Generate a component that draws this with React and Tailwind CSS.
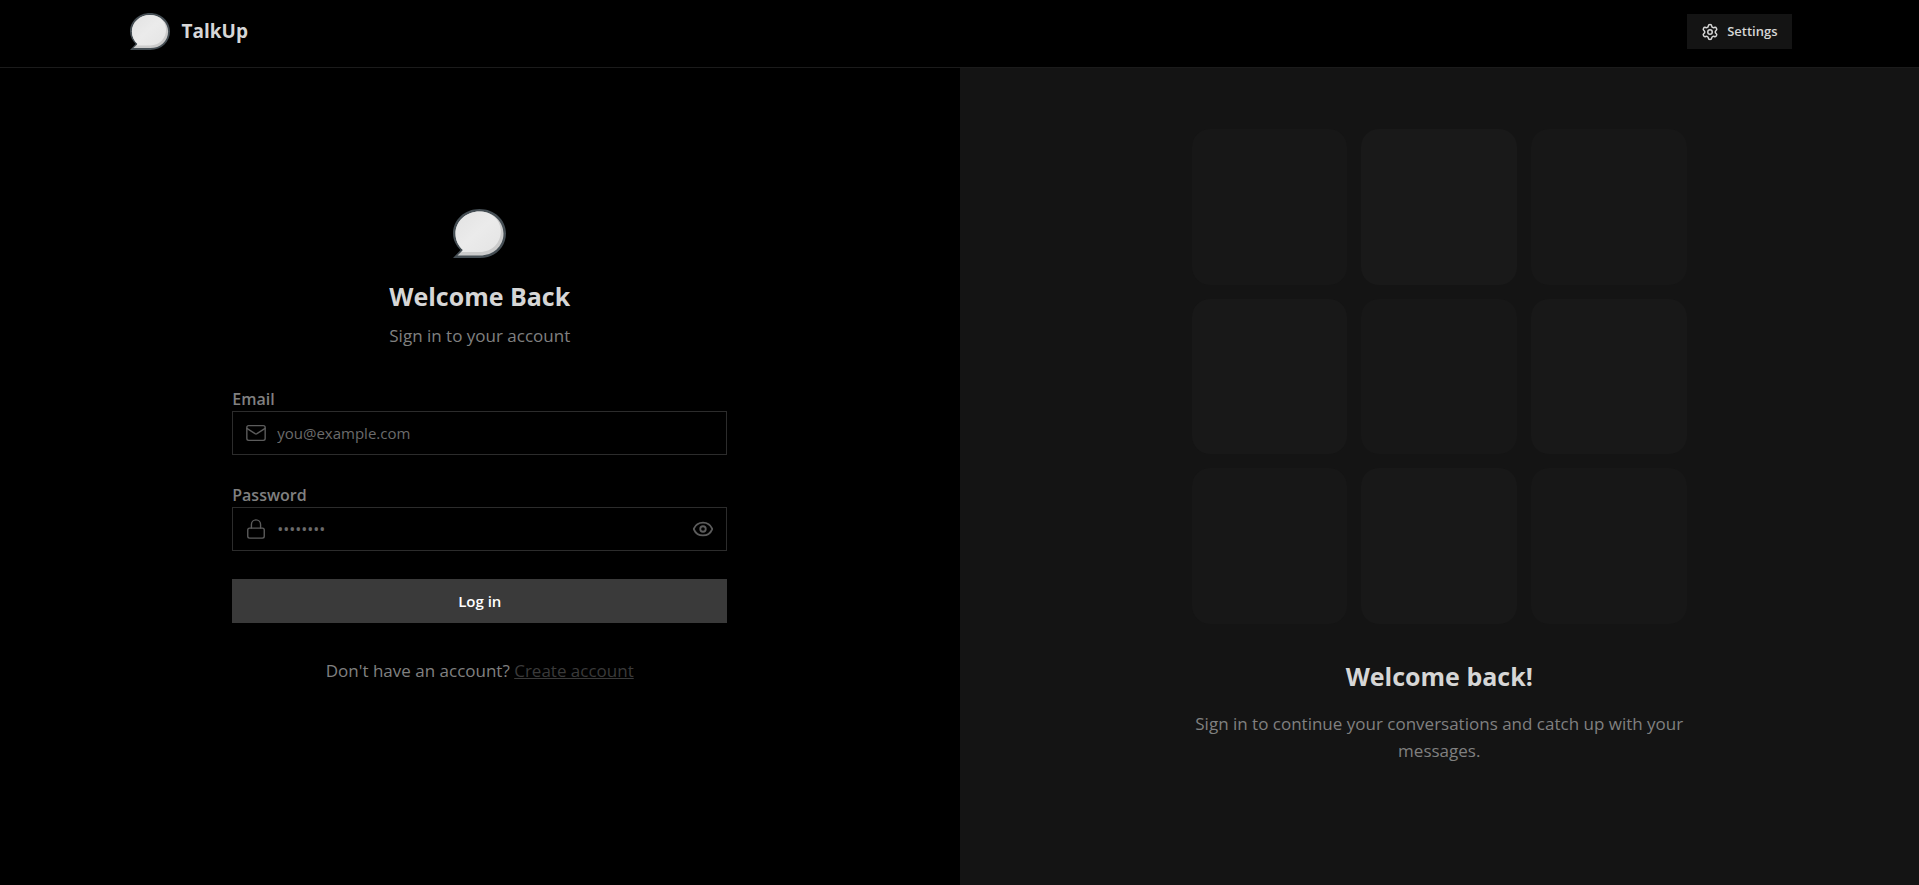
import { useId } from "react";
import { Mail, Lock, Eye, Settings } from "lucide-react";

const tiles = ["bg-[#171717]", "bg-[#191919]", "bg-[#171717]", "bg-[#181818]", "bg-[#171717]", "bg-[#181818]", "bg-[#171717]", "bg-[#181818]", "bg-[#171717]"];

function Logo({ className }) {
  const id = useId();
  return (
    <svg viewBox="0 0 53 49" className={className} aria-hidden="true">
      <defs>
        <linearGradient id={id} x1="0" y1="0" x2="1" y2="1">
          <stop offset="0" stopColor="#e2e2e2" />
          <stop offset="0.5" stopColor="#ebebeb" />
          <stop offset="1" stopColor="#e4e4e4" />
        </linearGradient>
      </defs>
      <path d="M0 49 L7.5 41 C3 36.500 0 31 0 24.500 C0 11 11.500 0 26.500 0 C41.500 0 53 11 53 24.500 C53 38.500 41.500 49 27 49 Z" fill="#454e54" />
      <path d="M4.500 46.500 L10 41 C5.500 37 2.500 31.500 2.500 24.500 C2.500 12.500 13 2.500 26.500 2.500 C40 2.500 50.500 12.500 50.500 24.500 C50.500 37.500 40 46.500 27 46.500 Z" fill="#cbcbcb" />
      <path d="M8.500 43 L10 41 C5.500 37 2.500 31.500 2.500 24.500 C2.500 12.500 13 2.500 26.500 2.500 C38 2.500 47 10 47.800 21 C48.500 34 38.500 43 27 43 Z" fill={`url(#${id})`} />
    </svg>
  );
}

export default function App() {
  return (
    <div className="flex min-h-screen flex-col bg-black font-['Open_Sans',sans-serif] text-[17px] leading-[27px] text-[#d6d6d6]">
      <header className="border-b border-[#1b1b1b]">
        <div className="mx-auto flex h-[67px] max-w-[1664px] items-center justify-between pb-1">
          <a href="#" className="flex items-center gap-3">
            <Logo className="ml-0.5 w-10" />
            <h1 className="text-[19px] font-bold">TalkUp</h1>
          </a>
          <button type="button" className="flex h-[35px] items-center gap-2 bg-[#141414] px-3.5 text-[13px] font-semibold">
            <Settings size={18} strokeWidth={2} />
            Settings
          </button>
        </div>
      </header>

      <main className="grid flex-1 lg:grid-cols-2">
        <section className="flex flex-col items-center justify-center px-6 pt-9 pb-24">
          <div className="w-full max-w-[495px]">
            <div className="mb-[38px] flex flex-col items-center">
              <Logo className="w-[53px]" />
              <h2 className="mt-5 text-[25px] leading-9 font-bold">Welcome Back</h2>
              <p className="mt-2 text-[#808080]">Sign in to your account</p>
            </div>
            <form className="flex flex-col">
              <label htmlFor="email" className="text-[16px] leading-6 font-semibold text-[#808080]">Email</label>
              <div className="flex h-11 items-center gap-2.5 border border-[#2c2c2c] px-3">
                <Mail size={22} strokeWidth={1.5} className="shrink-0 text-[#5c5c5c]" />
                <input id="email" type="email" placeholder="you@example.com" className="min-w-0 flex-1 bg-transparent text-[15px] outline-none placeholder:text-[#6b6b6b]" />
              </div>
              <label htmlFor="password" className="mt-7 text-[16px] leading-6 font-semibold text-[#808080]">Password</label>
              <div className="flex h-11 items-center gap-2.5 border border-[#2c2c2c] px-3">
                <Lock size={22} strokeWidth={1.5} className="shrink-0 text-[#5c5c5c]" />
                <input id="password" type="password" placeholder="••••••••" className="min-w-0 flex-1 bg-transparent text-[16px] outline-none placeholder:text-[#6b6b6b]" />
                <button type="button" aria-label="Show password" className="text-[#5c5c5c]"><Eye size={22} /></button>
              </div>
              <button type="submit" className="mt-7 h-11 bg-[#3a3a3a] text-[15px] font-semibold text-white">Log in</button>
            </form>
            <p className="mt-[34px] text-center text-[#808080]">
              Don't have an account? <a href="#" className="text-[#3a3a3a] underline">Create account</a>
            </p>
          </div>
        </section>

        <aside className="flex flex-col items-center justify-center bg-[#141414] px-6 pt-9 pb-24">
          <div className="w-full max-w-[495px] text-center">
            <div className="mb-[34px] grid grid-cols-3 gap-3.5">
              {tiles.map((tone, i) => <div key={i} className={`aspect-square rounded-[18px] ${tone}`} />)}
            </div>
            <h2 className="mb-4 text-[25px] leading-9 font-bold">Welcome back!</h2>
            <p className="text-[#808080]">Sign in to continue your conversations and catch up with your messages.</p>
          </div>
        </aside>
      </main>
    </div>
  );
}
